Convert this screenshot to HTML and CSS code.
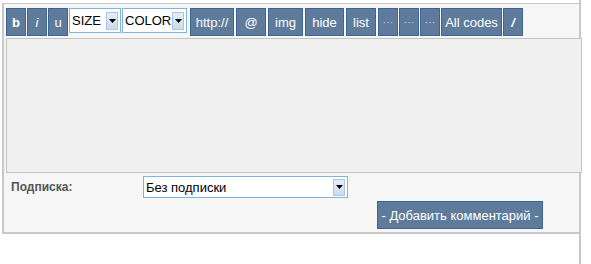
FILE: index.html
```html
<!DOCTYPE html>
<html lang="ru">
<head>
    <meta charset="UTF-8">
    <title>Комментарий</title>
    <link rel="stylesheet" href="styles.css">
</head>
<body>
    <div class="page">
        <form class="comment-box">
            <div class="toolbar">
                <button type="button" class="tag tag-b">b</button>
                <button type="button" class="tag tag-i">i</button>
                <button type="button" class="tag">u</button>
                <div class="pick pick-size"><span>SIZE</span><span class="arrow"><svg width="7" height="4" viewBox="0 0 7 4"><path d="M0 0h7L3.5 4z" fill="#000"/></svg></span></div>
                <div class="pick pick-color"><span>COLOR</span><span class="arrow"><svg width="7" height="4" viewBox="0 0 7 4"><path d="M0 0h7L3.5 4z" fill="#000"/></svg></span></div>
                <button type="button" class="tag spaced tag-url">http://</button>
                <button type="button" class="tag spaced tag-mail">@</button>
                <button type="button" class="tag spaced tag-img">img</button>
                <button type="button" class="tag spaced tag-hide">hide</button>
                <button type="button" class="tag spaced tag-list">list</button>
                <button type="button" class="tag spaced dots">···</button>
                <button type="button" class="tag dots">···</button>
                <button type="button" class="tag dots">···</button>
                <button type="button" class="tag tag-all">All codes</button>
                <button type="button" class="tag tag-i tag-b">/</button>
            </div>
            <textarea class="message"></textarea>
            <div class="field-row">
                <label class="field-label">Подписка:</label>
                <div class="pick pick-sub"><span>Без подписки</span><span class="arrow"><svg width="7" height="4" viewBox="0 0 7 4"><path d="M0 0h7L3.5 4z" fill="#000"/></svg></span></div>
            </div>
            <div class="submit-row">
                <button type="submit" class="submit">- Добавить комментарий -</button>
            </div>
        </form>
    </div>
</body>
</html>
```

FILE: styles.css
```css
body {
    margin: 0;
    padding: 0;
    background: #fff;
    font-family: "Liberation Sans", Arial, sans-serif;
}
.page {
    width: 581px;
    height: 264px;
    border-right: 2px solid #c8c8c8;
    padding-top: 3px;
    box-sizing: border-box;
}
.comment-box {
    margin: 0 0 0 2px;
    background: #f6f6f6;
    border-top: 1px solid #c8c8c8;
    border-left: 2px solid #c8c8c8;
    border-bottom: 2px solid #c8c8c8;
    padding: 4px 0 3px 2px;
}
.toolbar {
    display: flex;
    align-items: flex-start;
    gap: 1px;
}
.tag {
    height: 28px;
    width: 20px;
    padding: 0;
    margin: 0;
    background: #5e7b9c;
    border: 1px solid #3c6594;
    color: #fff;
    font-family: "Liberation Sans", Arial, sans-serif;
    font-size: 13px;
    white-space: nowrap;
    cursor: pointer;
}
.tag.spaced {
    margin-left: 1px;
}
.tag-url { width: 44px; }
.tag-mail { width: 30px; }
.tag-img { width: 35px; }
.tag-hide { width: 39px; }
.tag-list { width: 30px; }
.tag-all { width: 61px; }
.tag-b {
    font-weight: bold;
}
.tag-i {
    font-style: italic;
}
.tag.dots {
    font-size: 11px;
    color: #c6d2de;
}
.pick {
    display: flex;
    align-items: center;
    justify-content: space-between;
    background: #fff;
    border: 1px solid #7fb5dd;
    box-sizing: border-box;
    font-size: 13px;
    color: #000;
    padding: 0 2px 0 2px;
}
.pick-size {
    width: 52px;
    height: 25px;
}
.pick-color {
    width: 65px;
    height: 25px;
    margin-right: 1px;
}
.arrow {
    width: 12px;
    height: 18px;
    display: flex;
    align-items: center;
    justify-content: center;
    background: linear-gradient(#e4eef8, #c9dcef);
    border: 1px solid #a8c6e4;
    box-sizing: border-box;
}
.message {
    display: block;
    width: 576px;
    height: 135px;
    margin: 2px 0 0 0;
    box-sizing: border-box;
    background: #f0f0f0;
    border: 1px solid #c3c3c3;
    resize: none;
}
.field-row {
    display: flex;
    align-items: center;
    margin-top: 3px;
}
.field-label {
    width: 137px;
    box-sizing: border-box;
    padding-left: 5px;
    font-size: 12px;
    font-weight: bold;
    color: #555;
}
.pick-sub {
    width: 205px;
    height: 22px;
}
.pick-sub .arrow {
    height: 17px;
}
.submit-row {
    display: flex;
    justify-content: flex-end;
    padding: 3px 36px 0 0;
}
.submit {
    height: 28px;
    width: 166px;
    padding: 0;
    background: #5e7b9c;
    border: 1px solid #3c6594;
    color: #fff;
    font-family: "Liberation Sans", Arial, sans-serif;
    font-size: 13px;
    white-space: nowrap;
    cursor: pointer;
}
```
